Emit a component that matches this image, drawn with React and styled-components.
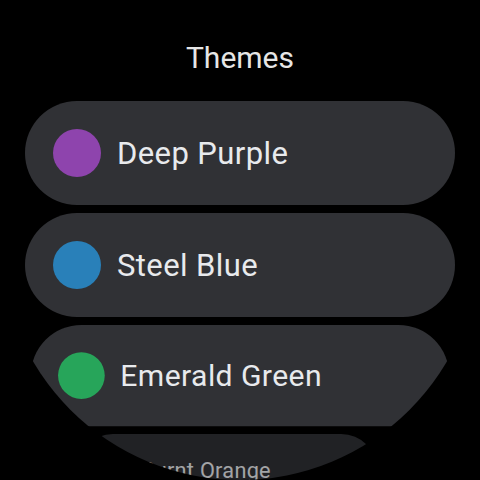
import React from 'react';
import styled, { createGlobalStyle } from 'styled-components';

const GlobalStyle = createGlobalStyle`
  html, body {
    margin: 0;
    padding: 0;
    background: #000;
  }
  body {
    font-family: Roboto, "Noto Sans", sans-serif;
  }
`;

const Screen = styled.div`
  width: 480px;
  height: 480px;
  box-sizing: border-box;
  padding-top: 40px;
  border-radius: 50%; /* round watch face */
  overflow: hidden;
  background: #000;
  display: flex;
  flex-direction: column;
  align-items: center;
`;

const Title = styled.h1`
  margin: 0 0 25px;
  font-size: 30px;
  font-weight: 400;
  line-height: 36px;
  color: #e6e6e6;
`;

const List = styled.div`
  display: flex;
  flex-direction: column;
  gap: 8px;
`;

const Chip = styled.div`
  flex-shrink: 0;
  width: 430px;
  height: 104px;
  box-sizing: border-box;
  padding-left: 28px;
  border-radius: 52px;
  background: #303135;
  display: flex;
  align-items: center;
  gap: 16px;
  transform-origin: center top;
  transform: translateX(${(p) => p.$shift}px) scale(${(p) => p.$scale});
  margin-bottom: ${(p) => -(1 - p.$scale) * 104}px; /* next chip follows the shrunk one */
  opacity: ${(p) => p.$fade};
`;

const Swatch = styled.span`
  flex-shrink: 0;
  width: 48px;
  height: 48px;
  border-radius: 50%;
  background: ${(p) => p.$color};
`;

const Label = styled.span`
  font-size: 31px;
  font-weight: 400;
  letter-spacing: 0.4px;
  color: #e8eaed;
  white-space: nowrap;
`;

const themes = [
  { name: 'Deep Purple', color: '#8e44ad', scale: 1, fade: 1, shift: 0 },
  { name: 'Steel Blue', color: '#2980b9', scale: 1, fade: 1, shift: 0 },
  { name: 'Emerald Green', color: '#27a55a', scale: 0.973, fade: 1, shift: 0 },
  { name: 'Burnt Orange', color: '#e67e22', scale: 0.7, fade: 0.7, shift: -13 },
];

export default function App() {
  return (
    <>
      <GlobalStyle />
      <Screen>
        <Title>Themes</Title>
        <List>
          {themes.map((t) => (
            <Chip key={t.name} $scale={t.scale} $fade={t.fade} $shift={t.shift}>
              <Swatch $color={t.color} />
              <Label>{t.name}</Label>
            </Chip>
          ))}
        </List>
      </Screen>
    </>
  );
}
